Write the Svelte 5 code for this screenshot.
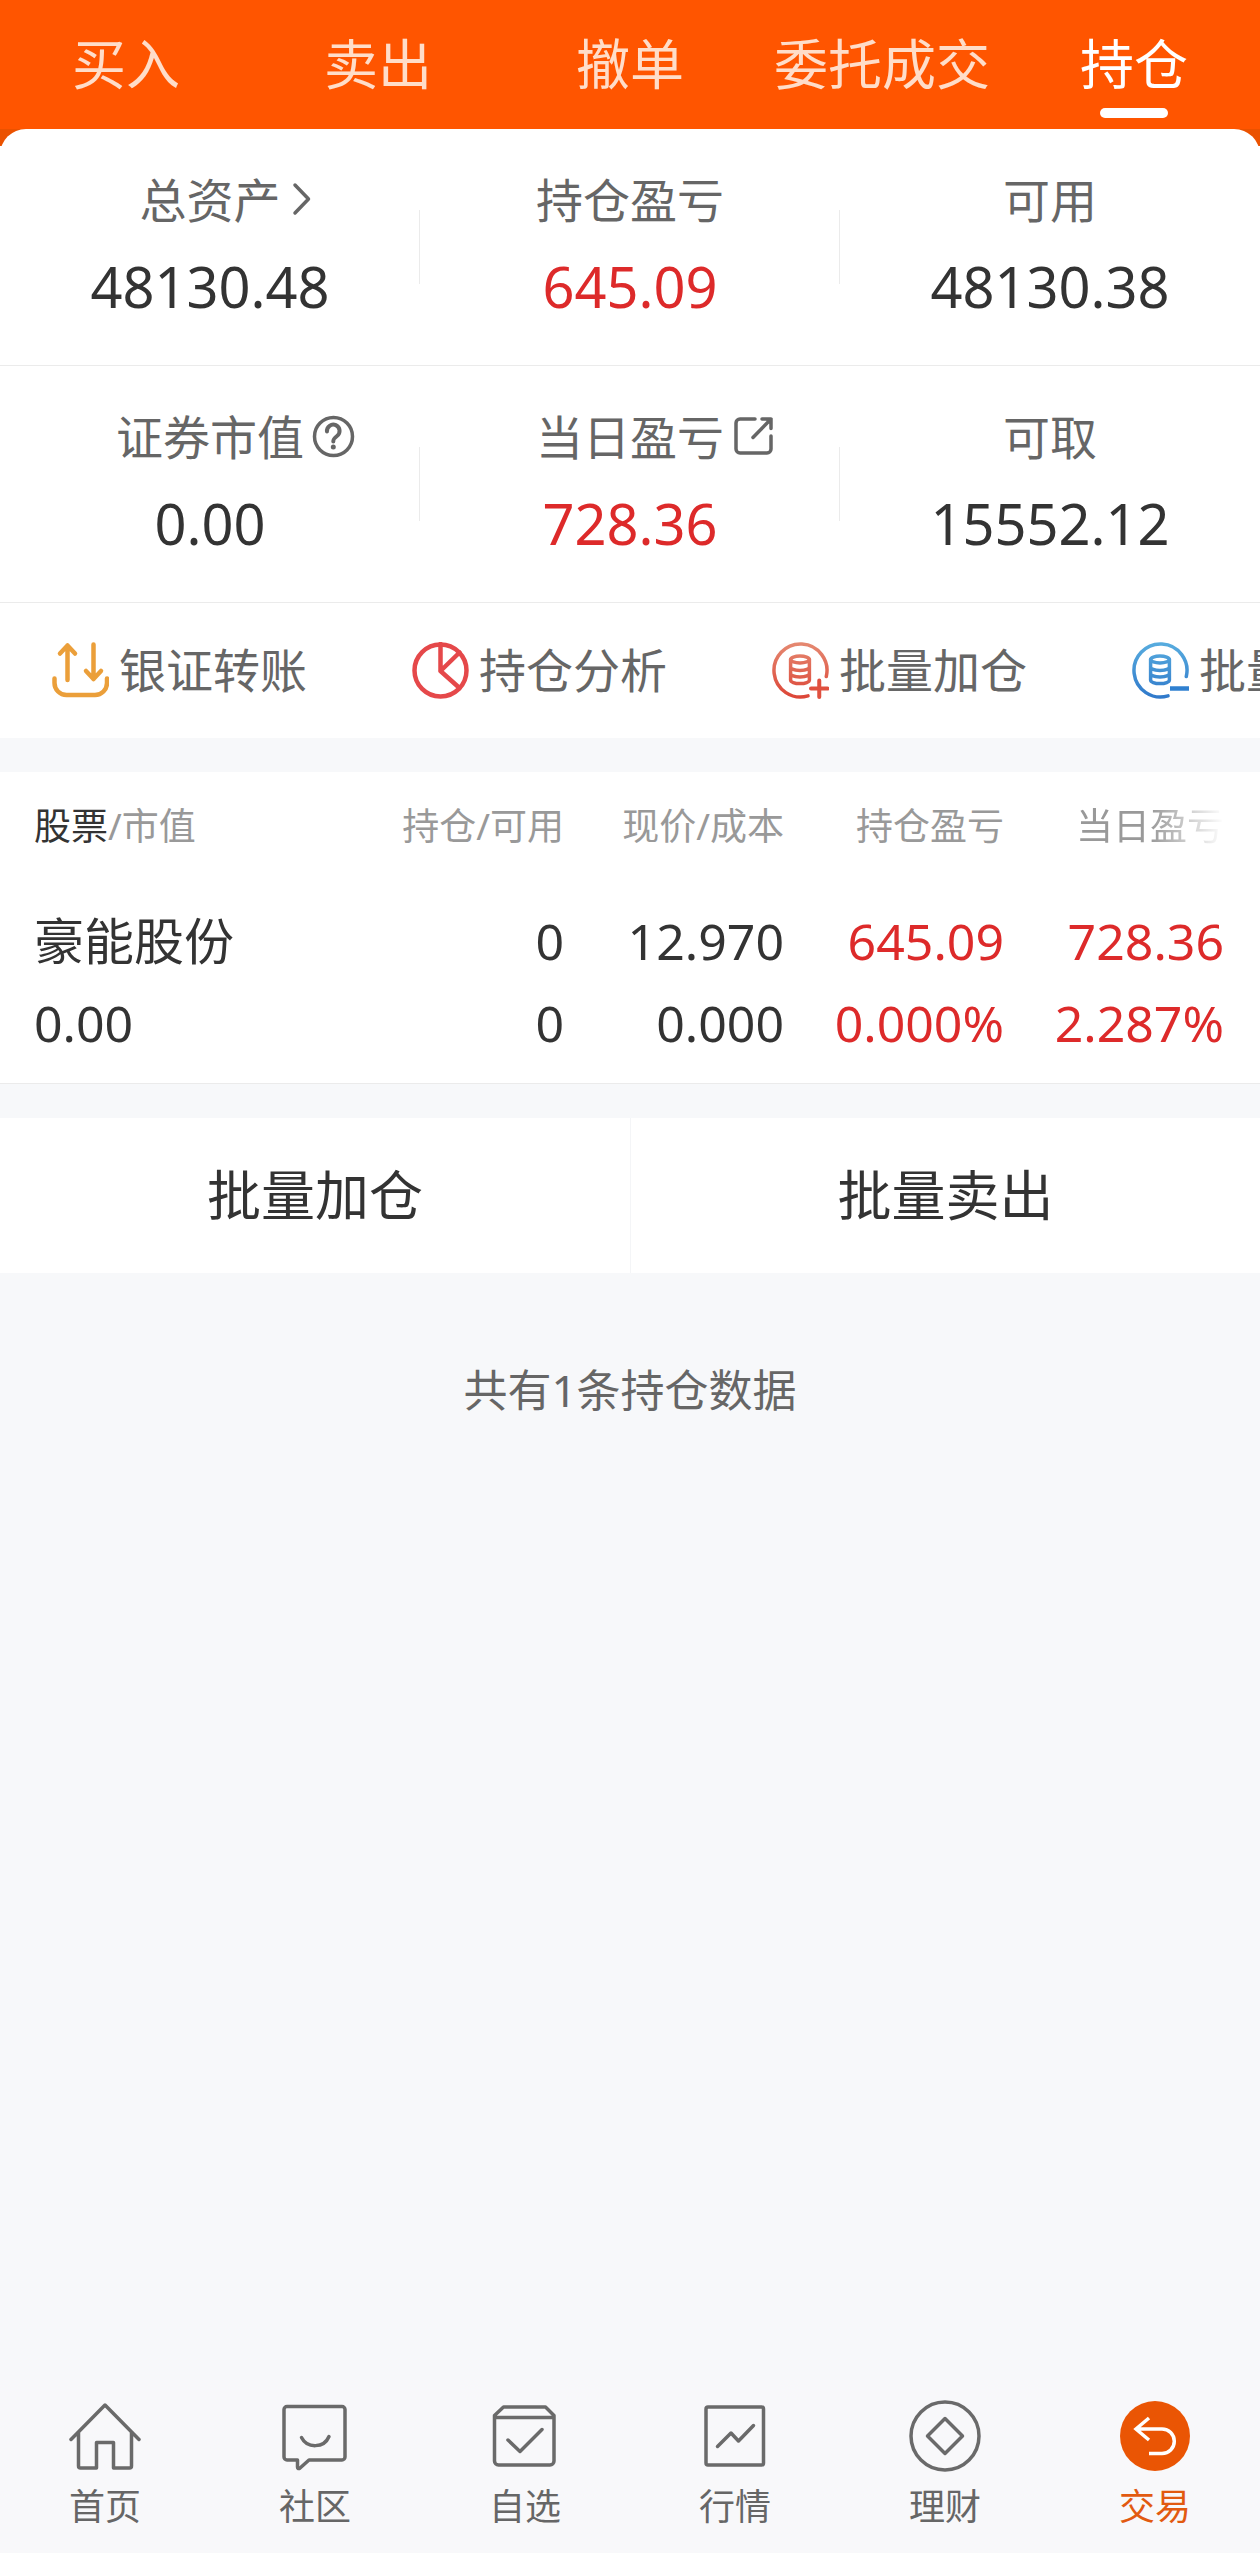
<script>
  const tabs = ['买入', '卖出', '撤单', '委托成交', '持仓'];
  let activeTab = $state('持仓');

  const summary = [
    [
      { label: '总资产', value: '48130.48', icon: 'chevron' },
      { label: '持仓盈亏', value: '645.09', up: true },
      { label: '可用', value: '48130.38' }
    ],
    [
      { label: '证券市值', value: '0.00', icon: 'help' },
      { label: '当日盈亏', value: '728.36', up: true, icon: 'share' },
      { label: '可取', value: '15552.12' }
    ]
  ];

  const actions = [
    { label: '银证转账', icon: 'transfer' },
    { label: '持仓分析', icon: 'pie' },
    { label: '批量加仓', icon: 'add' },
    { label: '批量卖出', icon: 'remove' }
  ];

  const holdings = [
    {
      name: '豪能股份', market: '0.00',
      cells: [
        { a: '0', b: '0' },
        { a: '12.970', b: '0.000' },
        { a: '645.09', b: '0.000%', up: true },
        { a: '728.36', b: '2.287%', up: true }
      ]
    }
  ];

  const nav = [
    { label: '首页', icon: 'home' },
    { label: '社区', icon: 'chat' },
    { label: '自选', icon: 'box' },
    { label: '行情', icon: 'chart' },
    { label: '理财', icon: 'coin' },
    { label: '交易', icon: 'trade' }
  ];
  const activeNav = '交易';
</script>

{#snippet cylinder()}
  <ellipse cx="28" cy="17.5" rx="9.4" ry="3.4" />
  <path d="M18.6 17.5V38c0 2 4 3.6 9.4 3.6s9.4-1.6 9.4-3.6V17.5M18.6 25c0 2 4 3.4 9.4 3.4s9.4-1.4 9.4-3.4M18.6 31.5c0 2 4 3.4 9.4 3.4s9.4-1.4 9.4-3.4" />
{/snippet}

<div class="page">
  <header>
    <nav class="tabs" aria-label="交易">
      {#each tabs as tab}
        <button class:active={tab === activeTab} onclick={() => (activeTab = tab)}>{tab}</button>
      {/each}
    </nav>
  </header>

  <main>
    <div class="corner">
      <section class="summary">
        {#each summary as row}
          <div class="row">
            {#each row as item}
              <div class="stat">
                <div class="label">
                  {item.label}
                  {#if item.icon}
                    <svg class="mark" viewBox="0 0 46 46" aria-hidden="true">
                      {#if item.icon === 'chevron'}
                        <path d="M8 9L21.5 23L8 37" />
                      {:else if item.icon === 'help'}
                        <circle cx="23.5" cy="23.5" r="19" />
                        <path stroke-width="4" d="M17 18.5a6.3 6.3 0 1 1 10 4.5c-2.500 1.800-3.700 2.800-3.700 5.500" />
                        <circle class="dot" cx="23.3" cy="34" r="2.500" />
                      {:else}
                        <path d="M25 6H10a4 4 0 0 0-4 4V36a4 4 0 0 0 4 4H37a4 4 0 0 0 4-4V23M32 6H41V15.500M41 6L23 24.500" />
                        <path class="dot" d="M35 6H41V12Z" />
                      {/if}
                    </svg>
                  {/if}
                </div>
                <div class="value" class:up={item.up}>{item.value}</div>
              </div>
            {/each}
          </div>
        {/each}
      </section>
    </div>

    <section class="actions">
      {#each actions as action}
        <button>
          <svg viewBox="0 0 57 57" aria-hidden="true">
            {#if action.icon === 'transfer'}
              <g stroke="#eb9f3a" stroke-width="4.5">
                <path d="M15.5 38V3.5M8 11.5L15.5 3.5L23 11.5M41.5 2.5V37M34 29L41.5 37L49 29" />
                <path d="M2.5 36.5V41a12 12 0 0 0 12 12H43a12 12 0 0 0 12-12V36.5" />
              </g>
            {:else if action.icon === 'pie'}
              <g stroke="#e5484a" stroke-width="4.5">
                <circle cx="28.5" cy="28.5" r="26" />
                <path d="M28.5 2V29L47.500 10.500M28.5 29L47.500 46" />
              </g>
            {:else if action.icon === 'add'}
              <linearGradient id="red" gradientUnits="userSpaceOnUse" x1="0" y1="0" x2="0" y2="57">
                <stop offset="0" stop-color="#e58a72" /><stop offset="1" stop-color="#dc4436" />
              </linearGradient>
              <g stroke="url(#red)" stroke-width="3.5">
                <path d="M54.3 34.5A26.5 26.5 0 1 0 36 53.900" />
                {@render cylinder()}
                <path stroke-width="4" stroke="#e0503f" d="M39 46.5H55.500M47.250 38.500V55" />
              </g>
            {:else}
              <linearGradient id="blue" gradientUnits="userSpaceOnUse" x1="0" y1="0" x2="0" y2="57">
                <stop offset="0" stop-color="#58addf" /><stop offset="1" stop-color="#2f78ca" />
              </linearGradient>
              <g stroke="url(#blue)" stroke-width="3.5">
                <path d="M54.3 34.5A26.5 26.5 0 1 0 36 53.900" />
                {@render cylinder()}
                <path stroke-width="4.5" stroke="#2f80d0" stroke-linecap="butt" d="M38 46.5H57" />
              </g>
            {/if}
          </svg>
          <span>{action.label}</span>
        </button>
      {/each}
    </section>

    <section class="holdings">
      <table>
        <thead>
          <tr>
            <th class="name"><b>股票</b>/市值</th>
            <th>持仓/可用</th>
            <th>现价/成本</th>
            <th>持仓盈亏</th>
            <th><span class="fade">当日盈亏</span></th>
          </tr>
        </thead>
        <tbody>
          {#each holdings as h}
            <tr>
              <td class="name"><div>{h.name}</div><div>{h.market}</div></td>
              {#each h.cells as c}
                <td class:up={c.up}><div>{c.a}</div><div>{c.b}</div></td>
              {/each}
            </tr>
          {/each}
        </tbody>
      </table>
    </section>

    <section class="batch">
      <button>批量加仓</button>
      <button>批量卖出</button>
    </section>

    <p class="count">共有1条持仓数据</p>
  </main>

  <nav class="bottom" aria-label="主导航">
    {#each nav as item}
      <a href="#{item.icon}" class:active={item.label === activeNav}>
        <svg viewBox="0 0 72 72" aria-hidden="true">
          {#if item.icon === 'home'}
            <path d="M2 39.5L36 5L70 39.5M9.5 32V66a2 2 0 0 0 2 2H27.5V42.5H44.5V68H60.5a2 2 0 0 0 2-2V32" />
          {:else if item.icon === 'chat'}
            <path d="M8 6.5H63a3 3 0 0 1 3 3V57a3 3 0 0 1-3 3H30L20.5 68.5Q18.5 69 18.5 67V60H8a3 3 0 0 1-3-3V9.5a3 3 0 0 1 3-3Z" />
            <path d="M22.5 37.5C28 48.5 45 48.5 50 36.5" />
          {:else if item.icon === 'box'}
            <path d="M5.5 17.5V61a4 4 0 0 0 4 4H61a4 4 0 0 0 4-4V17.5ZM5.5 17.5V15.5L14.5 7H56.5L65 15.5V17.5" />
            <path d="M19 40L31 51.5L53 29.5" />
          {:else if item.icon === 'chart'}
            <rect x="7" y="7" width="57.5" height="58" rx="2" />
            <path d="M18.5 46.5L32 33L39.5 41L54.5 25.5" />
          {:else if item.icon === 'coin'}
            <circle cx="36" cy="36" r="34" />
            <path d="M36 18.5L53.5 36L36 53.5L18.5 36Z" />
          {:else}
            <circle class="disc" cx="36" cy="36" r="35" />
            <path class="arrow" d="M30 18L17 29L30 40M17 29H43a12.3 12.3 0 0 1 0 24.6H30" />
          {/if}
        </svg>
        <span>{item.label}</span>
      </a>
    {/each}
  </nav>
</div>

<style>
  :global(body) {
    background: #f7f8fa;
  }
  .page {
    min-height: 100vh;
    display: flex;
    flex-direction: column;
    font-family: 'Noto Sans', 'Noto Sans CJK SC', sans-serif;
    color: #333;
  }
  button {
    border: 0;
    margin: 0;
    padding: 0;
    background: none;
    font: inherit;
    color: inherit;
    cursor: pointer;
  }
  svg {
    fill: none;
    stroke-linecap: round;
    stroke-linejoin: round;
    flex: none;
  }
  header {
    background: #ff5500;
  }
  .tabs {
    display: grid;
    grid-template-columns: repeat(5, 1fr);
  }
  .tabs button {
    position: relative;
    font-size: 54px;
    line-height: 129px;
    white-space: nowrap;
    color: #ffddc9;
  }
  .tabs .active {
    color: #fff;
  }
  .tabs .active::after {
    content: '';
    position: absolute;
    left: 50%;
    bottom: 11px;
    width: 68px;
    height: 10px;
    margin-left: -34px;
    border-radius: 5px;
    background: #fff;
  }
  main {
    flex: 1;
  }
  .corner {
    background: linear-gradient(#eb5200 17px, #fff 17px);
  }
  .summary {
    background: #fff;
    border-radius: 26px 26px 0 0;
  }
  .row {
    display: grid;
    grid-template-columns: repeat(3, 1fr);
    border-bottom: 1px solid #ebebeb;
  }
  .stat {
    position: relative;
    display: flex;
    flex-direction: column;
    align-items: center;
    padding: 35px 0 29px;
  }
  .stat + .stat::before {
    content: '';
    position: absolute;
    left: -1px;
    top: 81px;
    width: 1px;
    height: 74px;
    background: #ebebeb;
  }
  .label {
    position: relative;
    font-size: 47px;
    line-height: 72px;
    color: #666;
  }
  .mark {
    position: absolute;
    left: 100%;
    top: 12px;
    width: 46px;
    height: 46px;
    margin-left: 6px;
    stroke: #666;
    stroke-width: 3.5;
  }
  .dot {
    fill: #666;
    stroke: none;
  }
  .value {
    font-size: 56px;
    line-height: 100px;
  }
  .up {
    color: #dd2a2a;
  }
  .actions {
    display: flex;
    overflow-x: auto;
    scrollbar-width: none;
    background: #fff;
    padding-left: 52px;
  }
  .actions button {
    flex: 0 0 360px;
    display: flex;
    align-items: center;
    gap: 10px;
    font-size: 47px;
    line-height: 135px;
    white-space: nowrap;
    color: #666;
  }
  .actions svg {
    width: 57px;
    height: 57px;
  }
  .holdings {
    margin-top: 34px;
    background: #fff;
    padding: 0 36px 19px 34px;
    border-bottom: 1px solid #ebebeb;
  }
  table {
    width: 100%;
    table-layout: fixed;
    border-collapse: collapse;
  }
  th, td {
    width: 220px;
    padding: 0;
    text-align: right;
    white-space: nowrap;
  }
  th.name, td.name {
    width: auto;
    text-align: left;
  }
  th {
    font-size: 37px;
    font-weight: 400;
    line-height: 108px;
    padding-bottom: 20px;
    color: #999;
  }
  th b {
    font-weight: 400;
    color: #333;
  }
  .fade {
    mask-image: linear-gradient(to right, #000 50%, transparent);
  }
  td {
    font-size: 50px;
    line-height: 82px;
  }
  .batch {
    display: grid;
    grid-template-columns: 1fr 1fr;
    margin-top: 34px;
    background: #fff;
  }
  .batch button {
    font-size: 54px;
    line-height: 155px;
  }
  .batch button + button {
    border-left: 1px solid #f4f5f7;
  }
  .count {
    margin: 82px 0 0;
    text-align: center;
    font-size: 44px;
    line-height: 70px;
    color: #666;
  }
  .bottom {
    display: grid;
    grid-template-columns: repeat(6, 1fr);
    padding: 20px 0 19px;
    background: #f8f8fa;
  }
  .bottom a {
    display: flex;
    flex-direction: column;
    align-items: center;
    gap: 8px;
    font-size: 36px;
    line-height: 54px;
    color: #666;
    text-decoration: none;
  }
  .bottom svg {
    width: 72px;
    height: 72px;
    stroke: #6a6a6a;
    stroke-width: 3.5;
  }
  .bottom .active {
    color: #e25a10;
  }
  .bottom .disc {
    fill: #ea5504;
    stroke: none;
  }
  .bottom .arrow {
    stroke: #fff;
    stroke-linecap: butt;
    stroke-linejoin: miter;
  }
</style>
